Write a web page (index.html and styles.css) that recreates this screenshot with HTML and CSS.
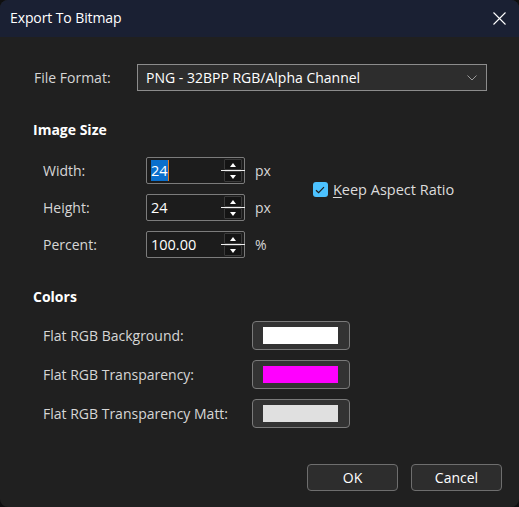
FILE: index.html
```html
<!DOCTYPE html>
<html>
<head>
<meta charset="utf-8">
<link rel="stylesheet" href="styles.css">
</head>
<body>
<div class="dialog">
  <div class="titlebar">
    <span class="title">Export To Bitmap</span>
    <svg class="close" width="13" height="13" viewBox="0 0 13 13"><path d="M0.5 0.5L12.5 12.5M12.5 0.5L0.5 12.5" stroke="#ffffff" stroke-width="1.1" fill="none"/></svg>
  </div>
  <div class="content">
    <div class="format-row">
      <span class="format-label">File Format:</span>
      <div class="select">
        <span>PNG - 32BPP RGB/Alpha Channel</span>
        <svg class="chev" width="10" height="6" viewBox="0 0 10 6"><path d="M0.5 0.5L5 5L9.5 0.5" stroke="#9a9a9a" stroke-width="1" fill="none"/></svg>
      </div>
    </div>

    <div class="section-title first">Image Size</div>
    <div class="size-block">
      <div class="size-rows">
        <div class="size-row">
          <span class="label">Width:</span>
          <div class="spin">
            <span class="value"><span class="sel">24</span><span class="caret"></span></span>
            <div class="spin-btns">
              <span class="sb up"></span><span class="sep"></span><span class="sb down"></span>
            </div>
          </div>
          <span class="unit">px</span>
        </div>
        <div class="size-row">
          <span class="label">Height:</span>
          <div class="spin">
            <span class="value">24</span>
            <div class="spin-btns">
              <span class="sb up"></span><span class="sep"></span><span class="sb down"></span>
            </div>
          </div>
          <span class="unit">px</span>
        </div>
        <div class="size-row">
          <span class="label">Percent:</span>
          <div class="spin">
            <span class="value">100.00</span>
            <div class="spin-btns">
              <span class="sb up"></span><span class="sep"></span><span class="sb down"></span>
            </div>
          </div>
          <span class="unit">%</span>
        </div>
      </div>
      <label class="check">
        <span class="box"><svg width="10" height="8" viewBox="0 0 10 8"><path d="M1 4.2L3.6 6.6L9 1.2" stroke="#1b1b1b" stroke-width="1.2" fill="none"/></svg></span>
        <span class="check-text"><u>K</u>eep Aspect Ratio</span>
      </label>
    </div>

    <div class="section-title second">Colors</div>
    <div class="color-rows">
      <div class="color-row">
        <span class="clabel">Flat RGB Background:</span>
        <div class="cbtn"><span class="swatch white"></span></div>
      </div>
      <div class="color-row">
        <span class="clabel">Flat RGB Transparency:</span>
        <div class="cbtn"><span class="swatch magenta"></span></div>
      </div>
      <div class="color-row">
        <span class="clabel">Flat RGB Transparency Matt:</span>
        <div class="cbtn"><span class="swatch grey"></span></div>
      </div>
    </div>

    <div class="actions">
      <div class="btn">OK</div>
      <div class="btn">Cancel</div>
    </div>
  </div>
</div>
</body>
</html>
```

FILE: styles.css
```css
html, body {
  margin: 0;
  padding: 0;
  background: #0f0f10;
}
body {
  font-family: "Open Sans", "Noto Sans", "Liberation Sans", sans-serif;
  font-size: 14px;
  color: #d6d6d6;
}
.dialog {
  width: 519px;
  height: 507px;
  box-sizing: border-box;
  border-radius: 8px;
  overflow: hidden;
  background: #202020;
  display: flex;
  flex-direction: column;
}
.titlebar {
  height: 37px;
  flex: none;
  background: #1a2033;
  display: flex;
  align-items: center;
  justify-content: space-between;
  padding: 0 13px 0 10px;
}
.title {
  color: #ffffff;
  font-size: 14px;
  letter-spacing: -0.1px;
  margin-top: -2px;
}
.close {
  margin-top: -1px;
}
.content {
  display: flex;
  flex-direction: column;
  flex: 1;
}
.format-row {
  display: flex;
  align-items: center;
  margin-top: 27px;
  padding-left: 34px;
}
.format-label {
  width: 103px;
  flex: none;
}
.select {
  width: 350px;
  height: 27px;
  box-sizing: border-box;
  border: 1px solid #8c8c8c;
  background: #2d2d2d;
  display: flex;
  align-items: center;
  justify-content: space-between;
  padding: 0 9px 0 8px;
  color: #ffffff;
}
.section-title {
  font-weight: 700;
  color: #ffffff;
  padding-left: 33px;
  line-height: 20px;
  height: 20px;
}
.section-title.first {
  margin-top: 29px;
}
.section-title.second {
  margin-top: 29px;
}
.size-block {
  display: flex;
  align-items: flex-start;
  margin-top: 17px;
}
.size-rows {
  display: flex;
  flex-direction: column;
  gap: 10px;
}
.size-row {
  display: flex;
  align-items: center;
  padding-left: 43px;
}
.label {
  width: 103px;
  flex: none;
}
.spin {
  width: 99px;
  height: 27px;
  box-sizing: border-box;
  border: 1px solid #7c7c7c;
  border-radius: 2px;
  background: #1c1c1c;
  display: flex;
  align-items: center;
  justify-content: space-between;
  padding-left: 4px;
  color: #ffffff;
  font-size: 14.5px;
}
.value {
  display: flex;
  align-items: center;
}
.sel {
  background: #0a6fcc;
  color: #ffffff;
  line-height: 21px;
}
.caret {
  width: 1px;
  height: 21px;
  background: #e07a20;
}
.spin-btns {
  width: 21px;
  height: 25px;
  display: flex;
  flex-direction: column;
  align-items: stretch;
  padding: 1px 0;
  box-sizing: border-box;
}
.sb {
  flex: 1;
  margin: 0 2px 0 1px;
  background: #141414;
  border: 1px solid #3a3a3a;
  border-radius: 1px;
  position: relative;
}
.sb::after {
  content: "";
  position: absolute;
  left: 50%;
  top: 50%;
  width: 0;
  height: 0;
  border-left: 3.5px solid transparent;
  border-right: 3.5px solid transparent;
  transform: translate(-50%, -50%);
}
.sb.up::after {
  border-bottom: 4px solid #ffffff;
}
.sb.down::after {
  border-top: 4px solid #ffffff;
}
.sep {
  height: 1px;
  background: #f0f0f0;
  margin: 0 -1px 0 -2px;
}
.unit {
  margin-left: 10px;
}
.check {
  display: flex;
  align-items: center;
  margin-top: 23px;
  margin-left: 42px;
}
.box {
  width: 15px;
  height: 15px;
  border-radius: 3px;
  background: #4cc2ff;
  display: flex;
  align-items: center;
  justify-content: center;
}
.check-text {
  margin-left: 5px;
  color: #dcdcdc;
  font-size: 14.5px;
}
.check-text u {
  text-underline-offset: 2px;
}
.color-rows {
  display: flex;
  flex-direction: column;
  gap: 10px;
  margin-top: 14px;
}
.color-row {
  display: flex;
  align-items: center;
  padding-left: 43px;
}
.clabel {
  width: 209px;
  flex: none;
}
.cbtn {
  width: 98px;
  height: 29px;
  box-sizing: border-box;
  border: 1px solid #7a7a7a;
  border-radius: 4px;
  background: #333333;
  display: flex;
  align-items: center;
  padding-left: 10px;
}
.swatch {
  width: 75px;
  height: 17px;
}
.swatch.white { background: #ffffff; }
.swatch.magenta { background: #ff00ff; }
.swatch.grey { background: #e0e0e0; }
.actions {
  display: flex;
  justify-content: flex-end;
  gap: 13px;
  margin-top: 36px;
  padding-right: 17px;
}
.btn {
  width: 91px;
  height: 27px;
  box-sizing: border-box;
  border: 1px solid #6e6e6e;
  border-radius: 4px;
  background: #2d2d2d;
  color: #ffffff;
  display: flex;
  align-items: center;
  justify-content: center;
}
```
